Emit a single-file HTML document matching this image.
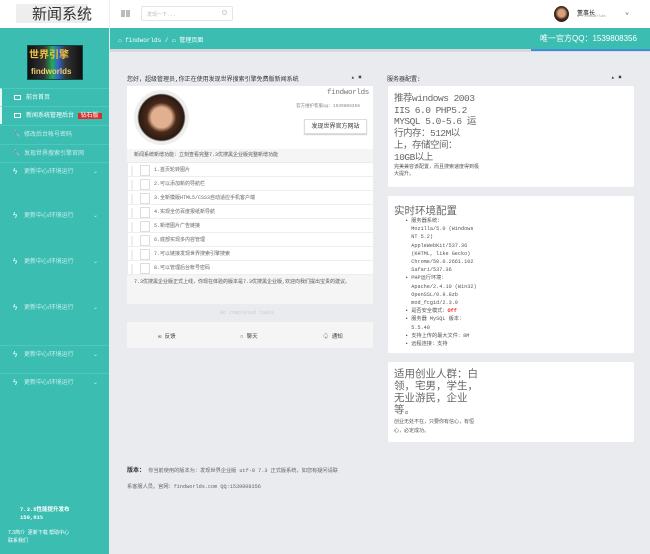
<!DOCTYPE html>
<html><head><meta charset="utf-8"><style>
*{margin:0;padding:0;box-sizing:border-box}
body{width:650px;height:554px;overflow:hidden;font-family:"Liberation Mono","Noto Sans CJK SC",monospace;font-size:6px;color:#555;background:#eaebef;position:relative}
.abs{position:absolute}
.sb{left:0;top:28px;width:109px;height:526px;background:#3bbdb2}
.nav{position:absolute;left:0;width:109px;height:18px;color:#fff;font-size:6px;line-height:18px;padding-left:24px;font-family:"Liberation Sans","Noto Sans CJK SC",sans-serif}
.nav.b{border-top:1px solid #4cc9be}
.nav i{position:absolute;left:12px;top:6px;width:7px;height:5px;border:1px solid #fff}
.nav .ar{position:absolute;left:93px;top:0;font-size:6px}
.li{position:absolute;left:128px;width:245px;height:14px;background:#fff;border-bottom:1px solid #eee;line-height:14px;padding-left:26px;font-size:5px;color:#666}
.li:before{content:"";position:absolute;left:3px;top:3px;width:2px;height:11px;background:#eee}
.li:after{content:"";position:absolute;left:12px;top:2px;width:8px;height:9px;border:1px solid #ddd}
</style></head><body>
<div class="abs" style="left:0;top:0;width:650px;height:28px;background:#fff"></div>
<div class="abs" style="left:16px;top:4px;width:72px;height:19px;background:#eee"></div>
<div class="abs" style="left:32px;top:3px;font-size:15px;color:#333;font-family:'Liberation Sans','Noto Sans CJK SC',sans-serif">新闻系统</div>
<div class="abs" style="left:109px;top:0;width:1px;height:28px;background:#eee"></div>
<div class="abs" style="left:121px;top:10px;width:9px;height:7px;background:repeating-linear-gradient(90deg,#bbb 0 4px,transparent 4px 5px)"></div>
<div class="abs" style="left:141px;top:6px;width:92px;height:15px;border:1px solid #e5e5e5;border-radius:2px;font-size:5px;color:#bbb;padding:4px 5px">发现一下...</div>
<div class="abs" style="left:222px;top:10px;width:5px;height:5px;border:1px solid #ccc;border-radius:50%"></div>
<div class="abs" style="left:554px;top:6px;width:15px;height:16px;border-radius:50%;background:radial-gradient(circle at 50% 45%,#d9a07c 30%,#3a2318 55%)"></div>
<div class="abs" style="left:577px;top:8px;font-size:6px;color:#222;font-family:'Liberation Sans','Noto Sans CJK SC',sans-serif">董事长</div>
<div class="abs" style="left:577px;top:15px;font-size:4px;color:#999">● findworlds</div>
<div class="abs" style="left:625px;top:8px;font-size:7px;color:#333">⌄</div>
<div class="abs sb"></div>
<div class="abs" style="left:27px;top:45px;width:56px;height:35px;background:linear-gradient(90deg,#111,#333 30%,#2a5 45%,#36c 55%,#333 70%,#111);border:1px solid #0a4a42"></div>
<div class="abs" style="left:29px;top:46px;font-size:10px;color:#f0c040;font-weight:bold;font-family:'Liberation Sans','Noto Sans CJK SC',sans-serif">世界引擎</div>
<div class="abs" style="left:31px;top:67px;font-size:8px;color:#f0d070;font-weight:bold;font-family:'Liberation Sans',sans-serif">findworlds</div>
<div class="nav b" style="top:88px;border-left:2px solid #e9f7f5"><i></i>前台首页</div>
<div class="nav b" style="top:106px;border-left:2px solid #e9f7f5"><i></i>新闻系统管理后台 <span style="background:#d9302c;padding:0 3px;margin-left:2px">钻石版</span></div>
<div class="nav b" style="top:125px;color:#c9efeb"><span class="abs" style="left:12px;font-size:7px;color:#fff">🔧</span>修改后台帐号密码</div>
<div class="nav b" style="top:144px;color:#c9efeb"><span class="abs" style="left:12px;font-size:7px;color:#fff">🔧</span>发现世界搜索引擎官网</div>
<div class="nav b" style="top:162px;color:#c9efeb"><span class="abs" style="left:13px;font-size:8px;color:#fff">ϟ</span>更新中心/环境运行<span class="ar">⌄</span></div>
<div class="nav" style="top:207px;color:#c9efeb"><span class="abs" style="left:13px;font-size:8px;color:#fff">ϟ</span>更新中心/环境运行<span class="ar">⌄</span></div>
<div class="nav" style="top:253px;color:#c9efeb"><span class="abs" style="left:13px;font-size:8px;color:#fff">ϟ</span>更新中心/环境运行<span class="ar">⌄</span></div>
<div class="nav" style="top:299px;color:#c9efeb"><span class="abs" style="left:13px;font-size:8px;color:#fff">ϟ</span>更新中心/环境运行<span class="ar">⌄</span></div>
<div class="nav b" style="top:345px;color:#c9efeb"><span class="abs" style="left:13px;font-size:8px;color:#fff">ϟ</span>更新中心/环境运行<span class="ar">⌄</span></div>
<div class="nav b" style="top:373px;color:#c9efeb"><span class="abs" style="left:13px;font-size:8px;color:#fff">ϟ</span>更新中心/环境运行<span class="ar">⌄</span></div>
<div class="abs" style="left:20px;top:506px;color:#fff;font-weight:bold;font-size:5.5px;line-height:8px">7.3.5性能提升发布<br>150,81%</div>
<div class="abs" style="left:8px;top:529px;color:#fff;font-size:5px;line-height:8px;font-family:'Liberation Sans','Noto Sans CJK SC',sans-serif">7.3简介 &nbsp;更新下载 帮助中心<br>联系我们</div>
<div class="abs" style="left:110px;top:28px;width:540px;height:21px;background:#3bbdb2"></div>
<div class="abs" style="left:110px;top:49px;width:540px;height:3px;background:#d8d8d8"></div>
<div class="abs" style="left:531px;top:49px;width:119px;height:2px;background:#3b8fd9"></div>
<div class="abs" style="left:118px;top:35px;color:#fff;font-size:6px">⌂ findworlds / ▭ 管理页面</div>
<div class="abs" style="left:540px;top:33px;color:#fff;font-size:8px;font-family:'Liberation Sans','Noto Sans CJK SC',sans-serif">唯一官方QQ：1539808356</div>
<div class="abs" style="left:127px;top:74px;font-size:6px;color:#333">您好，超级管理员,你正在使用发现世界搜索引擎免费版新闻系统</div>
<div class="abs" style="left:351px;top:74px;font-size:6px;color:#333">▴ ✖</div>
<div class="abs" style="left:127px;top:86px;width:246px;height:63px;background:#fff"></div>
<div class="abs" style="left:134px;top:90px;width:55px;height:55px;border-radius:50%;background:radial-gradient(ellipse at 50% 50%,#e0b090 0 26%,#4a2a1a 38%,#2a1a12 58%,#eee 62%)"></div>
<div class="abs" style="left:327px;top:89px;font-size:7.5px;letter-spacing:-0.3px;color:#777">findworlds</div>
<div class="abs" style="left:296px;top:103px;font-size:4.5px;color:#888">官方维护客服qq：1539808356</div>
<div class="abs" style="left:304px;top:119px;width:63px;height:15px;border:1px solid #ddd;background:#fff;font-size:6px;color:#333;text-align:center;line-height:13px;box-shadow:0 1px 1px #ccc">发现世界官方网站</div>
<div class="abs" style="left:127px;top:149px;width:246px;height:13px;background:#f5f5f5;font-size:5px;line-height:13px;padding-left:7px;color:#555">新闻系统新增功能：立刻查看完整7.3优搜黑企业版完整新增功能</div>
<div class="li" style="top:163px">1.首页轮转图片</div>
<div class="li" style="top:177px">2.可以添加新的导航栏</div>
<div class="li" style="top:191px">3.全新模版HTML5/CSS3自动适应手机客户端</div>
<div class="li" style="top:205px">4.实现全仿百度报纸新导航</div>
<div class="li" style="top:219px">5.新增图片广告链接</div>
<div class="li" style="top:233px">6.底部实现多内容管理</div>
<div class="li" style="top:247px">7.可以链接发现世界搜索引擎搜索</div>
<div class="li" style="top:261px">8.可以管理后台帐号密码</div>
<div class="abs" style="left:127px;top:275px;width:246px;height:29px;background:#f5f5f5;font-size:5px;line-height:10px;padding:2px 7px;color:#555">7.3优搜黑企业版正式上线，你现在体验的版本是7.3优搜黑企业版,欢迎向我们提出宝贵的建议。</div>
<div class="abs" style="left:220px;top:310px;font-size:5px;color:#ccc">No completed tasks</div>
<div class="abs" style="left:127px;top:322px;width:246px;height:26px;background:#f5f5f5"></div>
<div class="abs" style="left:158px;top:332px;font-size:5.5px;color:#444">✉ 反馈</div>
<div class="abs" style="left:240px;top:332px;font-size:5.5px;color:#444">○ 聊天</div>
<div class="abs" style="left:323px;top:332px;font-size:5.5px;color:#444">♤ 通知</div>
<div class="abs" style="left:387px;top:74px;font-size:6px;color:#333">服务器配置:</div>
<div class="abs" style="left:611px;top:74px;font-size:6px;color:#333">▴ ✖</div>
<div class="abs" style="left:388px;top:86px;width:246px;height:101px;background:#fff;border-radius:2px"></div>
<div class="abs" style="left:394px;top:93px;white-space:nowrap;font-size:9.5px;letter-spacing:-0.5px;line-height:11.7px;color:#666">推荐windows 2003<br>IIS 6.0 PHP5.2<br>MYSQL 5.0-5.6 运<br>行内存：512M以<br>上，存储空间：<br>10GB以上</div>
<div class="abs" style="left:394px;top:164px;width:86px;font-size:5px;line-height:7px;color:#555">完美兼容该配置，而且搜索速度得到极大提升。</div>
<div class="abs" style="left:388px;top:196px;width:246px;height:157px;background:#fff;border-radius:2px"></div>
<div class="abs" style="left:394px;top:203px;font-size:10.5px;color:#666">实时环境配置</div>
<div class="abs" style="left:405px;top:217px;width:110px;font-size:5.2px;line-height:8.2px;color:#555">
▪ 服务器系统：<br>&nbsp;&nbsp;Mozilla/5.0 (Windows<br>&nbsp;&nbsp;NT 5.2)<br>&nbsp;&nbsp;AppleWebKit/537.36<br>&nbsp;&nbsp;(KHTML, like Gecko)<br>&nbsp;&nbsp;Chrome/50.0.2661.102<br>&nbsp;&nbsp;Safari/537.36<br>▪ PHP运行环境：<br>&nbsp;&nbsp;Apache/2.4.10 (Win32)<br>&nbsp;&nbsp;OpenSSL/0.9.8zb<br>&nbsp;&nbsp;mod_fcgid/2.3.9<br>▪ 是否安全模式：<b style="color:#f22">Off</b><br>▪ 服务器 MySQL 版本：<br>&nbsp;&nbsp;5.5.40<br>▪ 支持上传的最大文件：8M<br>▪ 远程连接：支持</div>
<div class="abs" style="left:388px;top:362px;width:246px;height:80px;background:#fff;border-radius:2px"></div>
<div class="abs" style="left:394px;top:369px;width:88px;font-size:10.5px;line-height:12px;color:#666">适用创业人群：白领，宅男，学生，无业游民，企业等。</div>
<div class="abs" style="left:394px;top:418px;width:88px;font-size:5px;line-height:9px;color:#555">创业无处不在，只要你有信心，有恒心，必定成功。</div>
<div class="abs" style="left:127px;top:465px;font-size:5.2px;color:#666"><b style="color:#333;font-size:6px">版本：</b> 你当前使用的版本为：发现世界企业版 utf-8 7.3 正式版系统，如您有疑问请联</div>
<div class="abs" style="left:127px;top:483px;font-size:5.2px;color:#666">系客服人员。官网：findworlds.com QQ:1539808356</div>
</body></html>
